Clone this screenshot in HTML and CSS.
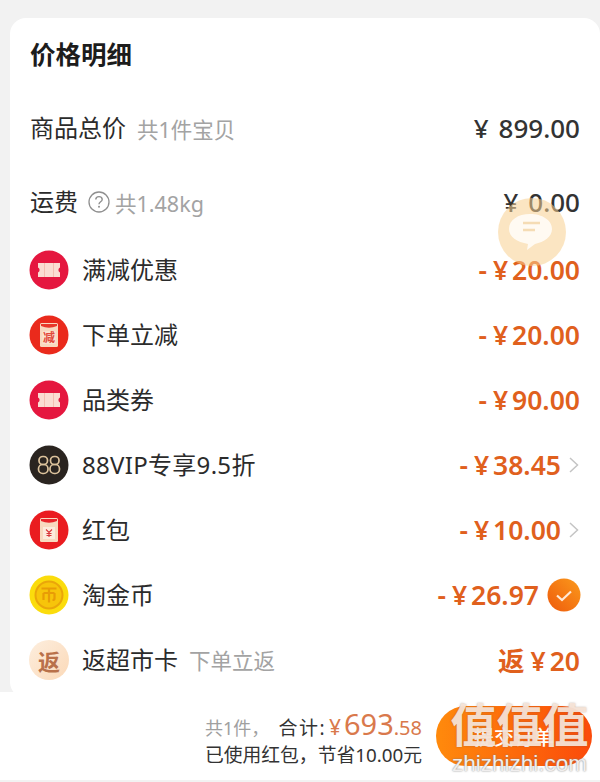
FILE: index.html
```html
<!DOCTYPE html>
<html lang="zh-CN">
    <head>
        <meta charset="utf-8">
        <title>价格明细</title>
        <link rel="stylesheet" href="styles.css">
    </head>
    <body>
        <section class="card">
            <h1 class="card-title">价格明细</h1>

            <div class="row row-total">
                <span class="label">商品总价</span>
                <span class="note">共1件宝贝</span>
                <span class="amount amount-dark"><span class="yen-wide">¥</span>899.00</span>
            </div>

            <div class="row row-freight">
                <span class="label">运费</span>
                <svg class="help-icon" viewBox="0 0 22 22">
                    <circle cx="11" cy="11" r="10" fill="none" stroke="#8f8f8f" stroke-width="1.3"/>
                    <path d="M7.8 8.6c0-1.9 1.4-3 3.2-3s3.2 1.1 3.2 2.8c0 2.4-3.2 2.4-3.2 4.8" fill="none" stroke="#8f8f8f" stroke-width="1.4"/>
                    <circle cx="11" cy="15.8" r="1" fill="#8f8f8f"/>
                </svg>
                <span class="note note-tight">共1.48kg</span>
                <span class="amount amount-dark"><span class="yen-wide">¥</span>0.00</span>
            </div>

            <div class="row">
                <svg class="icon" viewBox="0 0 40 40">
                    <circle cx="20" cy="20" r="19.5" fill="#e5173f"/>
                    <path d="M9 13h22v4.600a2.600 2.600 0 0 0 0 4.800V27H9v-4.600a2.600 2.600 0 0 0 0-4.800z" fill="#fbdcd2"/>
                    <path d="M15.500 13v14M24.500 13v14" stroke="#f3b5a8" stroke-width="0.800"/>
                </svg>
                <span class="label">满减优惠</span>
                <span class="amount amount-orange">-<span class="yen">¥</span>20.00</span>
            </div>

            <div class="row">
                <svg class="icon" viewBox="0 0 40 40">
                    <circle cx="20" cy="20" r="19.5" fill="#ea2a1c"/>
                    <rect x="11" y="8" width="18" height="24" rx="1.500" fill="#f8d9bf"/>
                    <path d="M12 9h16v2q-8 3.500-16 0z" fill="#e8382a"/>
                    <rect x="13.500" y="16" width="13" height="13" fill="#fbe3cf"/>
                    <text class="icon-glyph" x="20" y="27" text-anchor="middle">减</text>
                </svg>
                <span class="label">下单立减</span>
                <span class="amount amount-orange">-<span class="yen">¥</span>20.00</span>
            </div>

            <div class="row">
                <svg class="icon" viewBox="0 0 40 40">
                    <circle cx="20" cy="20" r="19.5" fill="#e5173f"/>
                    <path d="M9 13h22v4.600a2.600 2.600 0 0 0 0 4.800V27H9v-4.600a2.600 2.600 0 0 0 0-4.800z" fill="#fbdcd2"/>
                    <path d="M15.500 13v14M24.500 13v14" stroke="#f3b5a8" stroke-width="0.800"/>
                </svg>
                <span class="label">品类券</span>
                <span class="amount amount-orange">-<span class="yen">¥</span>90.00</span>
            </div>

            <div class="row">
                <svg class="icon" viewBox="0 0 40 40">
                    <circle cx="20" cy="20" r="19.5" fill="#2a2420"/>
                    <g fill="none" stroke="#dcc29c" stroke-width="1.700">
                        <rect x="10" y="11.500" width="8.500" height="8" rx="3.800"/>
                        <rect x="9.500" y="19.500" width="9.500" height="9" rx="4.200"/>
                        <rect x="21.500" y="11.500" width="8.500" height="8" rx="3.800"/>
                        <rect x="21" y="19.500" width="9.500" height="9" rx="4.200"/>
                    </g>
                </svg>
                <span class="label label-wide">88VIP专享9.5折</span>
                <span class="amount amount-orange">-<span class="yen">¥</span>38.45</span>
                <svg class="chevron" viewBox="0 0 12 20">
                    <path d="M2 3l7.500 7L2 17" fill="none" stroke="#c4c4c4" stroke-width="1.500"/>
                </svg>
            </div>

            <div class="row">
                <svg class="icon" viewBox="0 0 40 40">
                    <circle cx="20" cy="20" r="19.5" fill="#ea1c20"/>
                    <rect x="11" y="8" width="18" height="24" rx="1.500" fill="#f8d9bf"/>
                    <path d="M12 9h16v2q-8 3.500-16 0z" fill="#e8242a"/>
                    <rect x="14" y="17" width="12" height="12" fill="#fdebdc"/>
                    <path d="M17 19.500l3 3 3-3M20 22.500v4.500M17.500 23.500h5M17.500 25.500h5" stroke="#d9363a" stroke-width="1.100" fill="none"/>
                </svg>
                <span class="label">红包</span>
                <span class="amount amount-orange">-<span class="yen">¥</span>10.00</span>
                <svg class="chevron" viewBox="0 0 12 20">
                    <path d="M2 3l7.500 7L2 17" fill="none" stroke="#c4c4c4" stroke-width="1.500"/>
                </svg>
            </div>

            <div class="row">
                <svg class="icon" viewBox="0 0 40 40">
                    <circle cx="20" cy="20" r="19.500" fill="#fbdc0c"/>
                    <circle cx="20" cy="20" r="13.500" fill="#f7c40a" stroke="#eaa60a" stroke-width="2"/>
                    <path d="M12.500 13.500h15M20 13.500v14M14.500 18h11M14.500 18v7M25.500 18v5.500q0 1.500-2 1.500" fill="none" stroke="#e89c06" stroke-width="2.200"/>
                </svg>
                <span class="label">淘金币</span>
                <span class="amount amount-orange">-<span class="yen">¥</span>26.97</span>
                <svg class="check" viewBox="0 0 34 34">
                    <defs>
                        <linearGradient id="checkFill" x1="1" y1="0" x2="0" y2="1">
                            <stop offset="0" stop-color="#fb9a1c"/>
                            <stop offset="1" stop-color="#ee5a0c"/>
                        </linearGradient>
                    </defs>
                    <circle cx="17" cy="17" r="16.500" fill="url(#checkFill)"/>
                    <path d="M10 17.500l5 4.500 9-8.500" fill="none" stroke="#ffe9d6" stroke-width="2.200"/>
                </svg>
            </div>

            <div class="row">
                <span class="icon icon-back">返</span>
                <span class="label">返超市卡</span>
                <span class="note">下单立返</span>
                <span class="amount amount-orange">返<span class="yen">¥</span>20</span>
            </div>

            <div class="chat-bubble">
                <svg viewBox="0 0 68 68" width="68" height="68">
                    <circle cx="34" cy="34" r="34" fill="#f8cf90" fill-opacity="0.55"/>
                    <path d="M32 16c12 0 22 6 22 15 0 8-8 13-17 15l-8 6 1-6C19 44 11 39 11 31c0-9 9-15 21-15z" fill="#fffaf2"/>
                    <path d="M25 25h17M25 32h12" stroke="#f5dcb4" stroke-width="2.500"/>
                </svg>
            </div>
        </section>

        <footer class="bottom-bar">
            <div class="summary">
                <div class="summary-line">
                    <span class="summary-count">共1件，</span>
                    <span class="summary-label">合计:</span>
                    <span class="summary-price"><span class="summary-yen">¥</span>693<small>.58</small></span>
                </div>
                <div class="summary-saved">已使用红包，节省10.00元</div>
            </div>
            <button class="submit-btn">提交订单</button>
            <div class="watermark">
                <div class="watermark-mark">值值值</div>
                <div class="watermark-url">zhizhizhi.com</div>
            </div>
        </footer>
    </body>
</html>
```

FILE: styles.css
```css
* {
    box-sizing: border-box;
}

body {
    margin: 0;
    height: 782px;
    overflow: hidden;
    padding-top: 18px;
    background-color: #f2f2f2;
    font-family: "Noto Sans", "Noto Sans CJK SC", sans-serif;
    color: #2b2b2b;
}

.card {
    position: relative;
    margin-left: 10px;
    height: 680px;
    padding: 0 20px;
    background-color: #fff;
    border-radius: 16px 16px 0 16px;
}

.card-title {
    margin: 0;
    height: 74px;
    padding-top: 18px;
    font-size: 25.5px;
    line-height: 36px;
    font-weight: 700;
    color: #1c1c1c;
}

.row {
    display: flex;
    align-items: center;
    height: 65px;
}

.row-total {
    height: 72px;
}

.row-freight {
    height: 76px;
    margin-bottom: -3px;
}

.icon {
    flex: 0 0 40px;
    width: 40px;
    height: 40px;
    margin-right: 13px;
    margin-left: -1px;
}

.icon-glyph {
    font-size: 12px;
    font-weight: 700;
    fill: #e2483a;
}

.icon-back {
    display: flex;
    align-items: center;
    justify-content: center;
    border-radius: 50%;
    background: linear-gradient(135deg, #fdeede, #fbd9b8);
    color: #b9714a;
    font-size: 22px;
    font-weight: 700;
}

.label {
    font-size: 24px;
    line-height: 30px;
    color: #2b2b2b;
}

.label-wide {
    letter-spacing: 0.3px;
}

.note {
    margin-left: 11px;
    font-size: 21.5px;
    color: #a3a3a3;
}

.note-tight {
    margin-left: 5px;
}

.help-icon {
    width: 22px;
    height: 22px;
    margin-left: 10px;
}

.amount {
    margin-left: auto;
    font-size: 26px;
    font-weight: 500;
    white-space: nowrap;
}

.amount-dark {
    color: #333;
}

.amount-orange {
    color: #e0601d;
    font-size: 26.5px;
    font-weight: 600;
}

.yen {
    margin: 0 4px 0 6px;
}

.yen-wide {
    margin-right: 10px;
}

.chevron {
    width: 12px;
    height: 20px;
    margin-left: 7px;
}

.check {
    width: 34px;
    height: 34px;
    margin-left: 8px;
    margin-right: -1px;
}

.chat-bubble {
    position: absolute;
    left: 488px;
    top: 180px;
    width: 68px;
    height: 68px;
}

.bottom-bar {
    position: relative;
    display: flex;
    justify-content: flex-end;
    align-items: center;
    height: 88px;
    margin-top: -6px;
    padding-right: 8px;
    background-color: #fff;
}

.summary {
    margin-right: 14px;
    text-align: right;
}

.summary-line {
    display: flex;
    align-items: baseline;
    justify-content: flex-end;
    height: 38px;
}

.summary-count {
    margin-right: 9px;
    font-size: 18px;
    color: #a0a0a0;
}

.summary-label {
    margin-right: 3px;
    font-size: 19px;
    letter-spacing: 1.5px;
    color: #333;
}

.summary-price {
    font-size: 29px;
    color: #d9794c;
}

.summary-price small {
    font-size: 20px;
}

.summary-yen {
    font-size: 21px;
    margin-right: 3px;
}

.summary-saved {
    font-size: 18.8px;
    line-height: 26px;
    color: #333;
}

.submit-btn {
    width: 156px;
    height: 60px;
    border: none;
    border-radius: 30px;
    background: linear-gradient(90deg, #ff8a0c, #fb4a0a);
    color: #fff;
    font-family: inherit;
    font-size: 20px;
    font-weight: 500;
}

.watermark {
    position: absolute;
    right: 8px;
    top: 6px;
    width: 145px;
    text-align: center;
    color: rgba(250, 232, 220, 0.92);
    text-shadow: 0 0 2px rgba(120, 90, 70, 0.5);
}

.watermark-mark {
    font-size: 46px;
    line-height: 52px;
    font-weight: 700;
}

.watermark-url {
    margin-top: 3px;
    font-family: "Liberation Sans", sans-serif;
    font-size: 22.5px;
    line-height: 22px;
    color: #f0eeee;
    text-shadow: 0 0 2px #777;
}
```
